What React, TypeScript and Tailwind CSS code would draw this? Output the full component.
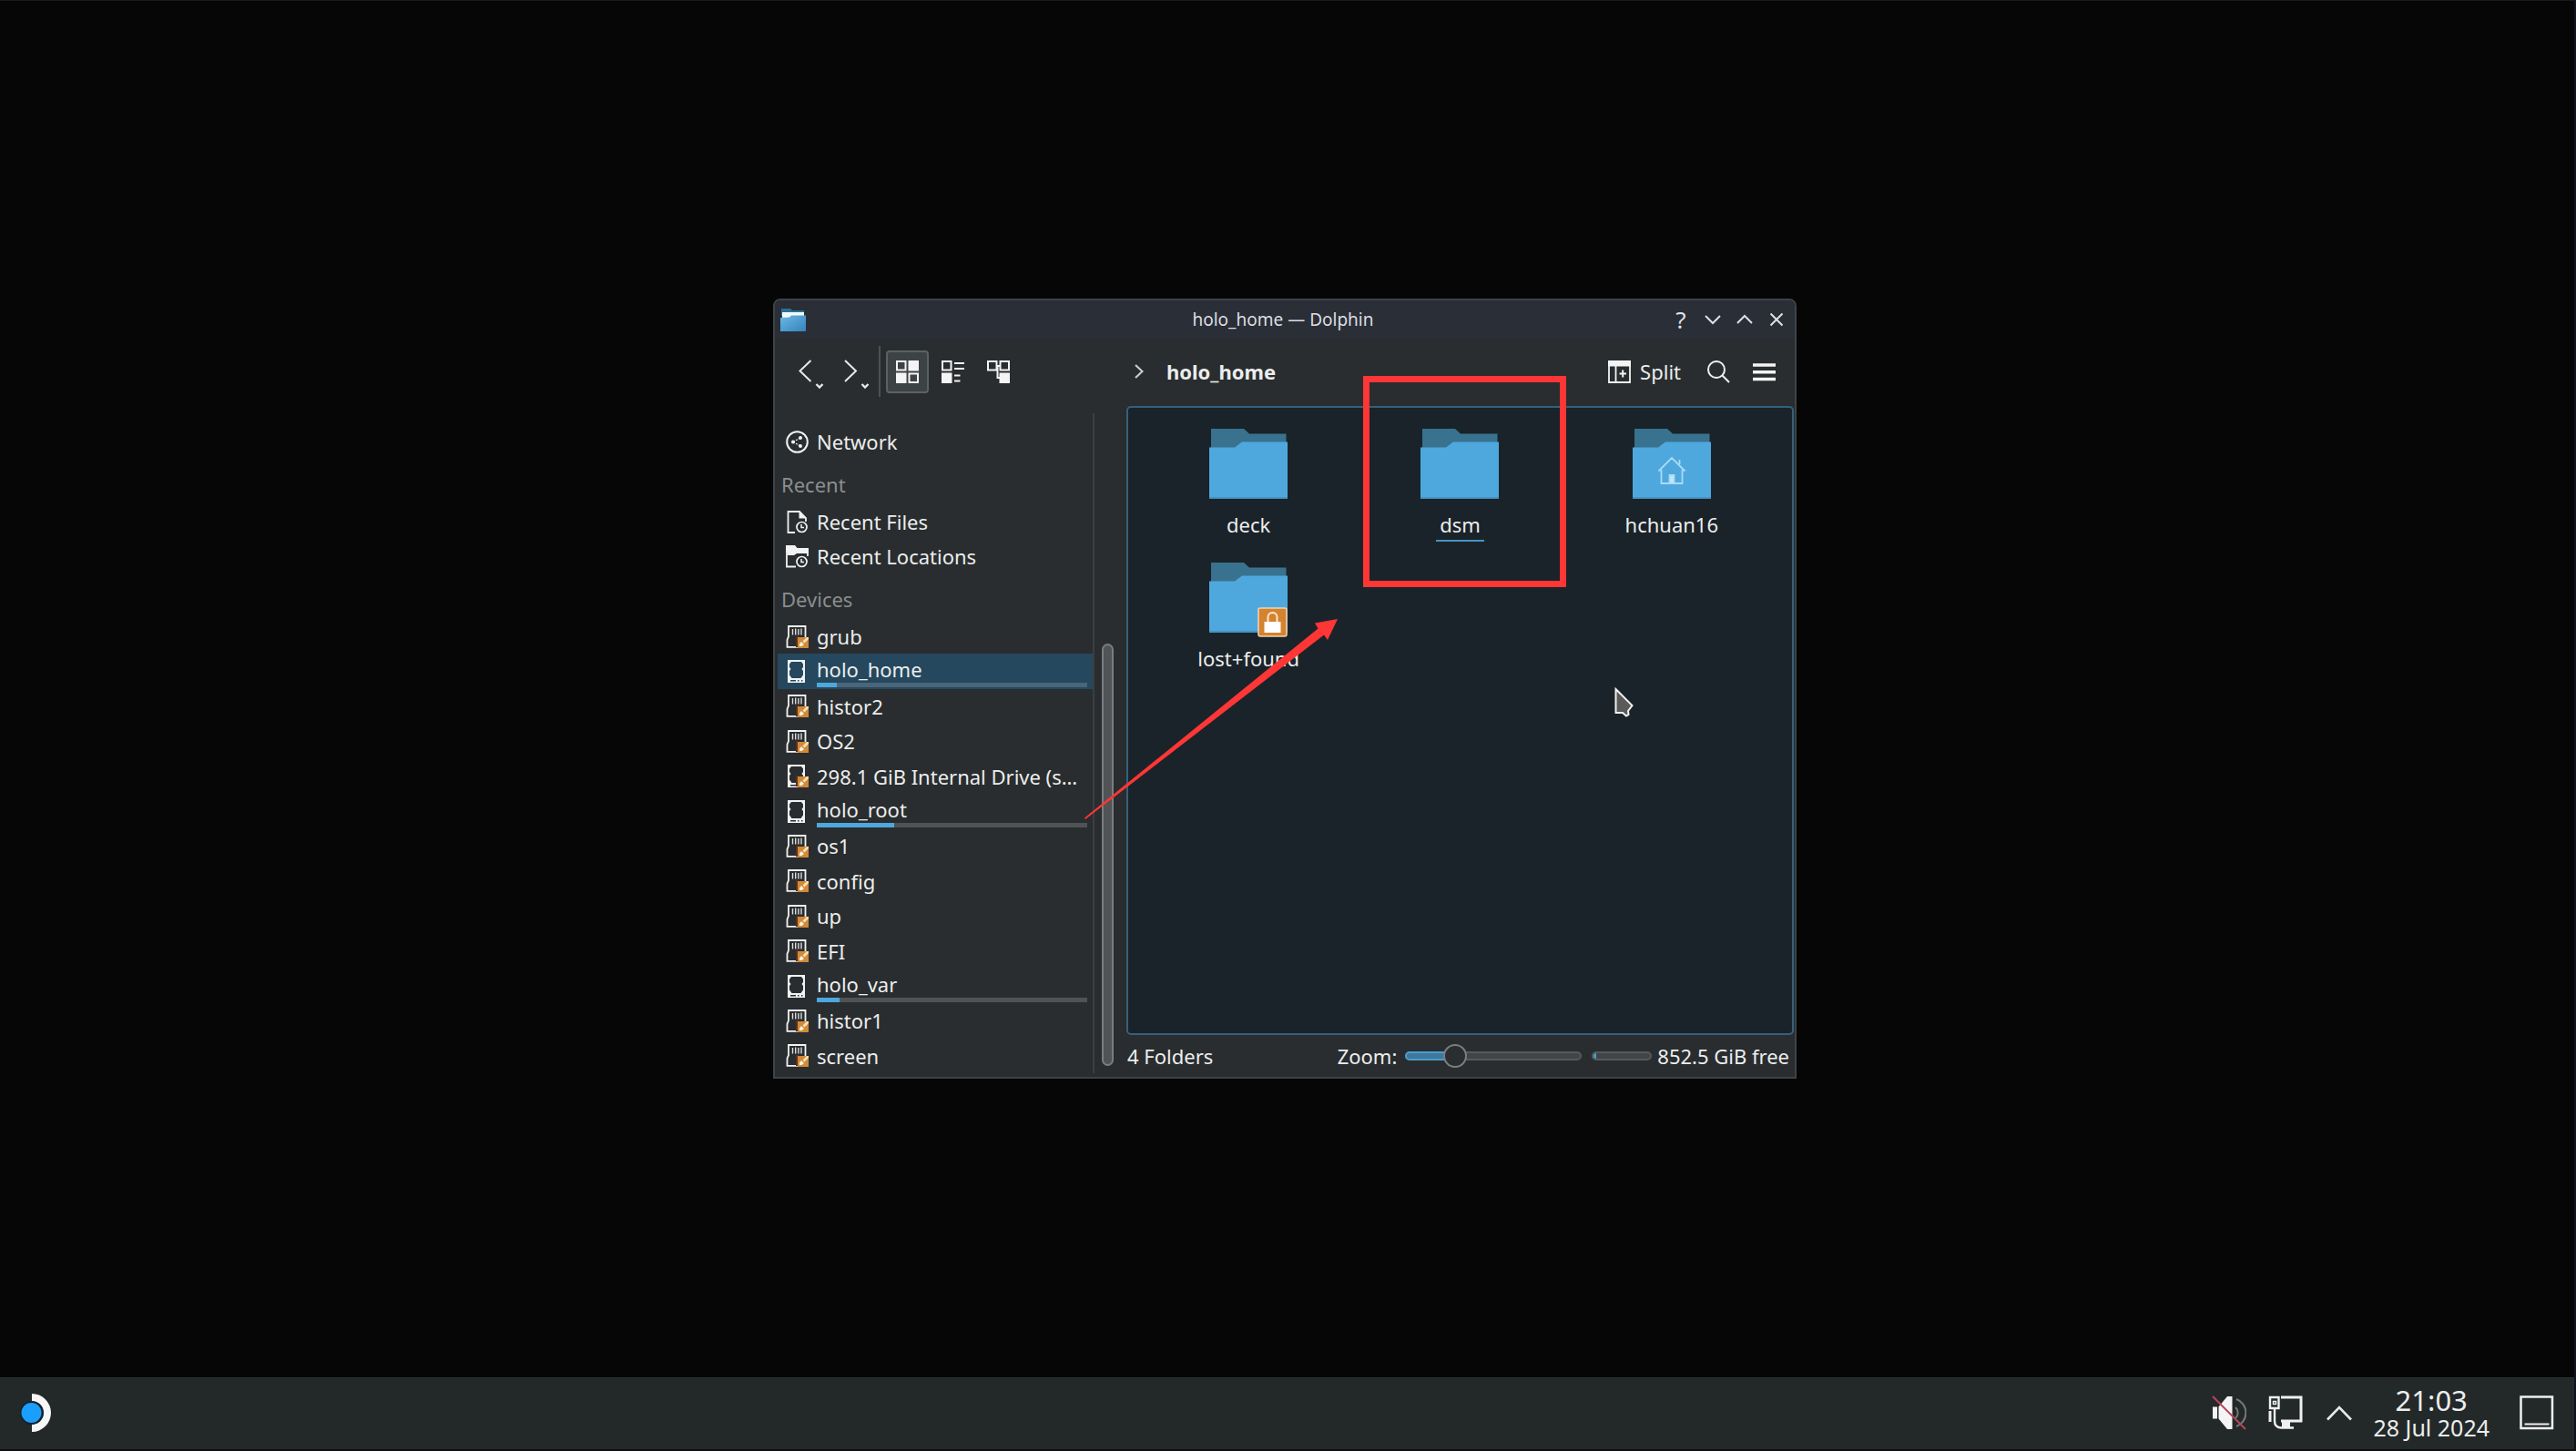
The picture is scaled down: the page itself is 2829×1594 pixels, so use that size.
import React from "react";

type Device = { name: string; kind: "card" | "disk" | "disk-unmounted"; used?: number; active?: boolean };

const devices: Device[] = [
  { name: "grub", kind: "card" },
  { name: "holo_home", kind: "disk", used: 7.5, active: true },
  { name: "histor2", kind: "card" },
  { name: "OS2", kind: "card" },
  { name: "298.1 GiB Internal Drive (s…", kind: "disk-unmounted" },
  { name: "holo_root", kind: "disk", used: 28.5 },
  { name: "os1", kind: "card" },
  { name: "config", kind: "card" },
  { name: "up", kind: "card" },
  { name: "EFI", kind: "card" },
  { name: "holo_var", kind: "disk", used: 8.5 },
  { name: "histor1", kind: "card" },
  { name: "screen", kind: "card" },
];

const folders: { name: string; emblem?: "home" | "lock"; hovered?: boolean }[] = [
  { name: "deck" },
  { name: "dsm", hovered: true },
  { name: "hchuan16", emblem: "home" },
  { name: "lost+found", emblem: "lock" },
];

/* ---------- sidebar icons ---------- */

const UnmountedBadge = () => (
  <g>
    <rect x="11" y="12" width="3" height="12" fill="#5a2f1c" />
    <rect x="13" y="13" width="12" height="12" fill="#d08a3a" />
    <path d="M15 20.500l2-2.500 3 3-2.500 2h-2.500z" fill="#fdf1de" />
    <path d="M18.500 17.500l4.500-4.500h2v2l-4.500 4.500z" fill="#fbe0ae" />
  </g>
);

const CardIcon = () => (
  <svg viewBox="0 0 25 25" className="size-[25px] shrink-0" fill="none">
    <path d="M13 23.800H1.500V16L3 12V1H21.500V14" stroke="#f2f2f2" strokeWidth="1.800" />
    <path d="M7.500 4v6.500M10.700 3.500v7M13.900 4v6.500M17 3.500v7" stroke="#dcdcdc" strokeWidth="1.400" />
    <UnmountedBadge />
  </svg>
);

const DiskIcon = ({ unmounted }: { unmounted?: boolean }) => (
  <svg viewBox="0 0 25 25" className="size-[25px] shrink-0">
    <path
      fillRule="evenodd"
      fill="#f2f2f2"
      d="M2 0H21V25H2ZM6 2L4 4.500V8L5.500 10L4 12V16.500L6.500 20H16.500L19 16.500V12L17.500 10L19 8V4.500L17 2ZM5 22V23.500H11V22ZM13 22V23.500H14.500V22ZM17 22V23.500H18.500V22Z"
    />
    {unmounted && <UnmountedBadge />}
  </svg>
);

const NetworkIcon = () => (
  <svg viewBox="0 0 25 25" className="size-[25px] shrink-0" fill="none">
    <circle cx="12.500" cy="12.500" r="11.300" stroke="#f2f2f2" strokeWidth="2" />
    <path d="M8 12.500L16 8M8 12.500L16 17" stroke="#f2f2f2" strokeWidth="1.300" strokeDasharray="2 1.500" />
    <circle cx="8" cy="12.500" r="2" fill="#f2f2f2" />
    <circle cx="16" cy="8" r="2" fill="#f2f2f2" />
    <circle cx="16" cy="17" r="2" fill="#f2f2f2" />
  </svg>
);

const RecentClock = () => (
  <g>
    <circle cx="17.500" cy="18" r="5.500" stroke="#f2f2f2" strokeWidth="1.700" />
    <path d="M17 15v3.500h3" stroke="#f2f2f2" strokeWidth="1.500" />
  </g>
);

const RecentFilesIcon = () => (
  <svg viewBox="0 0 25 25" className="size-[25px] shrink-0" fill="none">
    <path d="M10 24H2.500V1H15L22 8V12" stroke="#f2f2f2" strokeWidth="1.800" />
    <path d="M14.500 1V8.500H22.500Z" fill="#f2f2f2" />
    <RecentClock />
  </svg>
);

const RecentLocationsIcon = () => (
  <svg viewBox="0 0 25 25" className="size-[25px] shrink-0" fill="none">
    <path d="M0 0H10L12.500 3H25V9H12L9 11H2V8H0Z" fill="#f2f2f2" />
    <path d="M11 23.500H1V4M24 4V12" stroke="#f2f2f2" strokeWidth="1.800" />
    <RecentClock />
  </svg>
);

/* ---------- toolbar icons ---------- */

const NavArrow = ({ forward }: { forward?: boolean }) => (
  <svg viewBox="0 0 30 40" className="h-10 w-[30px]" fill="none" stroke="#e8e8e8">
    <path d={forward ? "M2 8L14 19.500L2 31" : "M14.500 8L2.500 19.500L14.500 31"} strokeWidth="2" />
    <path d="M20.500 34L24 37.500L27.500 34" strokeWidth="2.400" />
  </svg>
);

const IconsViewIcon = () => (
  <svg viewBox="0 0 25 25" className="size-[25px]" fill="none" stroke="#f4f4f4" strokeWidth="2">
    <path d="M1 1H10.500V10.500H1ZM14.500 14.500H24V24H14.500Z" />
    <path d="M13.500 0H25V11.500H13.500ZM0 13.500H11.500V25H0Z" fill="#f4f4f4" stroke="none" />
  </svg>
);

const CompactViewIcon = () => (
  <svg viewBox="0 0 25 25" className="size-[25px]" fill="none" stroke="#f4f4f4" strokeWidth="2">
    <path d="M1 1H10.500V10.500H1Z" />
    <path d="M0 13.500H11.500V25H0Z" fill="#f4f4f4" stroke="none" />
    <path d="M14 3H25M14 9H25M14 16.500H20.500M14 22.500H20.500" />
  </svg>
);

const TreeViewIcon = () => (
  <svg viewBox="0 0 25 25" className="size-[25px]" fill="none" stroke="#f4f4f4" strokeWidth="2">
    <path d="M1 1H10.500V10.500H1ZM14.500 1H24V10.500H14.500Z" />
    <path d="M10.500 6H14.500M11.500 6V19H14" />
    <path d="M13.500 13.500H25V25H13.500Z" fill="#f4f4f4" stroke="none" />
  </svg>
);

const SplitIcon = () => (
  <svg viewBox="0 0 25 25" className="size-[25px]" fill="none" stroke="#f4f4f4">
    <path d="M0 0H25V6.500H0Z" fill="#f4f4f4" stroke="none" />
    <path d="M1 1V24H24V1M8.500 6V24" strokeWidth="1.800" />
    <path d="M12.500 14.500H20M16.200 10.500V18.500" strokeWidth="2" />
  </svg>
);

const SearchIcon = () => (
  <svg viewBox="0 0 25 25" className="size-[25px]" fill="none" stroke="#f0f0f0" strokeWidth="2">
    <circle cx="10" cy="10" r="9" />
    <path d="M16.500 16.500L24 24" />
  </svg>
);

const MenuIcon = () => (
  <svg viewBox="0 0 25 25" className="size-[25px]" stroke="#f4f4f4" strokeWidth="3.600">
    <path d="M0 5H25M0 12.700H25M0 20.500H25" />
  </svg>
);

const WindowGlyph = ({ d }: { d: string }) => (
  <svg viewBox="0 0 20 20" className="size-5" fill="none" stroke="#dfe0e2" strokeWidth="2">
    <path d={d} />
  </svg>
);

const AppIcon = () => (
  <svg viewBox="0 0 28 25" className="h-[25px] w-7">
    <defs>
      <linearGradient id="app" x1="0" y1="0" x2="1" y2="1">
        <stop offset="0" stopColor="#6cb8e6" />
        <stop offset="1" stopColor="#3583bb" />
      </linearGradient>
    </defs>
    <path d="M1 0H11L13 2H26V8H1Z" fill="#2e6f92" />
    <path d="M2 4H26V10H2Z" fill="#f3fafd" />
    <path d="M0 10L10 9.500L12 7.500H28V25H0Z" fill="url(#app)" />
  </svg>
);

/* ---------- file view ---------- */

const FolderIcon = ({ emblem }: { emblem?: "home" | "lock" }) => (
  <svg viewBox="0 0 86 82" className="h-[82px] w-[86px]" fill="none">
    <path d="M2 0H38L44 5.500H84.500V40H2Z" fill="#38728f" />
    <path d="M0 20.500H28L36 14.500H86V77H0Z" fill="#4fa8dd" />
    <path d="M0 76H86" stroke="#4593c4" strokeWidth="2" />
    {emblem === "home" && (
      <g stroke="#a9dcf6" strokeWidth="1.800">
        <path d="M28.500 46.500L43 32L57.500 46.500M31.500 45V60H54.500V45M51.500 39V34" />
        <path d="M40.500 51H45.500V60H40.500Z" fill="#c9e6f6" />
      </g>
    )}
    {emblem === "lock" && (
      <g>
        <rect x="54" y="50" width="31" height="31" rx="2" fill="#d4832f" stroke="#f2d3b0" strokeWidth="1.500" />
        <path d="M64.500 66V60a5 5 0 0 1 10 0V66" stroke="#fbe9d2" strokeWidth="2" />
        <rect x="60.500" y="65" width="18" height="12" fill="#fff" />
      </g>
    )}
  </svg>
);

const SidebarRow = ({ icon, children }: { icon: React.ReactNode; children: React.ReactNode }) => (
  <li>
    <button className="flex h-[38px] w-full items-center gap-[9px] pl-[9px] text-left">
      {icon}
      <span className="leading-[30px]">{children}</span>
    </button>
  </li>
);

const DeviceRow = ({ device }: { device: Device }) => (
  <li className={device.active ? "bg-[#25485e]" : ""}>
    <button className="flex h-full w-full items-center gap-[9px] pr-[6px] pl-[9px] text-left">
      {device.kind === "card" ? <CardIcon /> : <DiskIcon unmounted={device.kind === "disk-unmounted"} />}
      <span className="flex-1 whitespace-nowrap">
        <span className="block leading-[30px]">{device.name}</span>
        {device.used !== undefined && (
          <span className={device.active ? "block h-[5px] bg-[#4a6678]" : "block h-[5px] bg-[#4f5356]"}>
            <span className="block h-full bg-[#4fa8dd]" style={{ width: `${device.used}%` }} />
          </span>
        )}
      </span>
    </button>
  </li>
);

const Places = () => (
  <nav className="mt-2 mb-1 flex w-[351px] flex-col border-r-2 border-[#3a3f42] pt-3 pl-[3px]">
    <ul>
      <SidebarRow icon={<NetworkIcon />}>Network</SidebarRow>
    </ul>
    <h2 className="h-[50px] pt-[13px] pl-1 leading-[30px] text-[#8b8e90]">Recent</h2>
    <ul>
      <SidebarRow icon={<RecentFilesIcon />}>Recent Files</SidebarRow>
      <SidebarRow icon={<RecentLocationsIcon />}>Recent Locations</SidebarRow>
    </ul>
    <h2 className="h-[50px] pt-[13px] pl-1 leading-[30px] text-[#8b8e90]">Devices</h2>
    <ul className="grid flex-1 auto-rows-fr">
      {devices.map((device) => (
        <DeviceRow key={device.name} device={device} />
      ))}
    </ul>
  </nav>
);

const TitleBar = () => (
  <header className="grid h-[42px] grid-cols-[1fr_auto_1fr] items-center bg-[#2a2e37] pr-[10px] pl-[6px]">
    <AppIcon />
    <h1 className="text-[19px] leading-7 text-[#dcdde0]">holo_home — Dolphin</h1>
    <div className="flex items-center justify-end gap-[15px]">
      <button aria-label="Help" className="w-5 text-center text-[26px] leading-7 text-[#dfe0e2]">?</button>
      <button aria-label="Minimize"><WindowGlyph d="M2 6L10 14L18 6" /></button>
      <button aria-label="Maximize"><WindowGlyph d="M2 14L10 6L18 14" /></button>
      <button aria-label="Close"><WindowGlyph d="M3.500 3.500L16.500 16.500M16.500 3.500L3.500 16.500" /></button>
    </div>
  </header>
);

const Toolbar = () => (
  <div className="flex h-[74px] items-center pb-[2px]">
    <div className="flex w-[386px] items-center pl-[25px]">
      <div className="flex gap-5">
        <button aria-label="Back"><NavArrow /></button>
        <button aria-label="Forward"><NavArrow forward /></button>
      </div>
      <div className="mr-[6px] ml-[9px] h-14 w-[2px] bg-[#4c5154]" />
      <div className="flex gap-[3px]">
        <button aria-label="Icons" className="grid size-[47px] place-items-center rounded-[4px] border-2 border-[#5c6164] bg-[#3d4245]">
          <IconsViewIcon />
        </button>
        <button aria-label="Compact" className="grid size-[47px] place-items-center"><CompactViewIcon /></button>
        <button aria-label="Details" className="grid size-[47px] place-items-center"><TreeViewIcon /></button>
      </div>
    </div>
    <div className="flex flex-1 items-center gap-[25px] pl-[9px]">
      <svg viewBox="0 0 10 16" className="h-4 w-[10px]" fill="none" stroke="#c9cbcc" strokeWidth="2.200">
        <path d="M1 1L8.500 8L1 15" />
      </svg>
      <a href="#" className="leading-[30px] font-bold">holo_home</a>
    </div>
    <div className="flex items-center pr-[21px]">
      <button className="mr-[29px] flex items-center gap-[10px]">
        <SplitIcon />
        <span className="leading-[30px]">Split</span>
      </button>
      <button aria-label="Search" className="mr-[25px]"><SearchIcon /></button>
      <button aria-label="Menu"><MenuIcon /></button>
    </div>
  </div>
);

const StatusBar = () => (
  <footer className="flex h-[46px] items-center pr-[5px] pl-[1px]">
    <span className="flex-1 leading-[30px]">4 Folders</span>
    <label htmlFor="zoom" className="leading-[30px]">Zoom:</label>
    <div className="relative ml-[9px] flex h-[26px] w-[194px] items-center">
      <div className="h-[10px] w-full rounded-full border-2 border-[#55595c] bg-[#414548]" />
      <div className="absolute left-0 h-[10px] w-[55px] rounded-full border-2 border-[#4b9ccd] bg-[#3e789a]" />
      <input
        id="zoom"
        type="range"
        min={0}
        max={16}
        defaultValue={4}
        className="absolute inset-0 h-[26px] w-full appearance-none bg-transparent [&::-webkit-slider-thumb]:size-[26px] [&::-webkit-slider-thumb]:appearance-none [&::-webkit-slider-thumb]:rounded-full [&::-webkit-slider-thumb]:border-2 [&::-webkit-slider-thumb]:border-[#7b7e80] [&::-webkit-slider-thumb]:bg-[#2a2e30]"
      />
    </div>
    <div className="mr-[6px] ml-[11px] h-[10px] w-[66px] overflow-hidden rounded-full border-2 border-[#55595c] bg-[#414548]">
      <div className="h-full w-[3px] bg-[#4b9ccd]" />
    </div>
    <span className="leading-[30px]">852.5 GiB free</span>
  </footer>
);

const DolphinWindow = () => (
  <section className="absolute top-[328px] left-[849px] flex h-[857px] w-[1124px] flex-col overflow-hidden rounded-t-[8px] border-2 border-[#3e4346] bg-[#292d2f]">
    <TitleBar />
    <Toolbar />
    <div className="flex flex-1">
      <Places />
      <div className="flex w-[35px] flex-col pt-[261px] pb-3 pl-2">
        <div className="w-[13px] flex-1 rounded-full border-2 border-[#7a7d7f] bg-[#505456]" />
      </div>
      <div className="flex flex-1 flex-col pr-[1px]">
        <main className="grid flex-1 auto-rows-[147px] grid-cols-3 rounded-[5px] border-2 border-[#36607c] bg-[#1a2329] px-4 pt-[23px]">
          {folders.map((folder) => (
            <a key={folder.name} href="#" className="flex flex-col items-center gap-2">
              <FolderIcon emblem={folder.emblem} />
              <span
                className={
                  folder.hovered
                    ? "border-b-2 border-[#4593c4] px-1 pb-[2px] leading-[30px]"
                    : "px-1 leading-[30px]"
                }
              >
                {folder.name}
              </span>
            </a>
          ))}
        </main>
        <StatusBar />
      </div>
    </div>
  </section>
);

const Taskbar = () => (
  <footer className="flex h-[81px] items-center border-t border-b-2 border-t-[#2b3032] border-b-[#0b1015] bg-[#232929] px-[22px] pb-[2px]">
    <button aria-label="Application launcher">
      <svg viewBox="0 0 36 44" className="h-11 w-9">
        <path d="M13 1A21 21 0 0 1 13 43V34.500A12.500 12.500 0 0 0 13 9.500Z" fill="#f7f7f7" />
        <circle cx="13" cy="22" r="13" fill="#15202c" />
        <circle cx="12.500" cy="22" r="11" fill="#1a9fff" />
      </svg>
    </button>
    <div className="ml-auto flex items-center">
      <button aria-label="Volume muted" className="mr-6">
        <svg viewBox="0 0 38 38" className="size-[38px]" fill="none">
          <path d="M1 12.500H6V25.500H1ZM7.500 12.500L17 1H22.500V37H17L7.500 25.500Z" fill="#f4f4f4" />
          <path d="M26 13a8 8 0 0 1 0 12" stroke="#75797a" strokeWidth="2" />
          <path d="M27 4a16 16 0 0 1 0 30" stroke="#75797a" strokeWidth="2" />
          <path d="M1 1L37 37" stroke="#b8455c" strokeWidth="2" />
        </svg>
      </button>
      <button aria-label="Wired network" className="mr-[26px]">
        <svg viewBox="0 0 38 38" className="size-[38px]" fill="none" stroke="#f0f0f0">
          <path d="M14 2H36V28H14" strokeWidth="3" />
          <path d="M2 2H11.500V14H2ZM7 14V28Q7 35 14 35.500H28" strokeWidth="2.400" />
          <path d="M5.500 6.500H8.500V9.500H5.500Z" strokeWidth="1.500" />
          <path d="M2 17V29" strokeWidth="3" />
          <path d="M15 28H24V35H15Z" fill="#f0f0f0" stroke="none" />
        </svg>
      </button>
      <button aria-label="Show hidden icons" className="mr-[23px]">
        <svg viewBox="0 0 28 18" className="h-[18px] w-7" fill="none" stroke="#e8e8e8" strokeWidth="2.600">
          <path d="M1 16.500L14 3L27 16.500" />
        </svg>
      </button>
      <button className="mr-[33px] text-center text-[#eceded]">
        <span className="block text-[31px] leading-8">21:03</span>
        <span className="block text-[25px] leading-7">28 Jul 2024</span>
      </button>
      <button aria-label="Show desktop">
        <svg viewBox="0 0 38 38" className="size-[38px]" fill="none" stroke="#f0f0f0">
          <path d="M1.500 1.500H36V36H1.500Z" strokeWidth="2.500" />
          <path d="M5.500 31.500H32.500" strokeWidth="2" />
        </svg>
      </button>
    </div>
  </footer>
);

/* Red box and arrow drawn over the window */
const Annotations = () => (
  <>
    <div className="pointer-events-none absolute top-[413px] left-[1497px] h-[232px] w-[223px] border-[7px] border-[#ff3636]" />
    <svg viewBox="0 0 280 224" className="pointer-events-none absolute top-[678px] left-[1190px] h-[224px] w-[280px]">
      <path d="M1 220.500L257.500 12.500L254 6.500L279 2L268 25L264 19.500L2 222Z" fill="#ff3636" />
    </svg>
    <svg viewBox="0 0 22 34" className="pointer-events-none absolute top-[755px] left-[1773px] h-[34px] w-[22px]">
      <path d="M1.500 2V28H9L13 31.500L15.500 30L15 26L19.500 20Z" fill="#5a5a5a" stroke="#f0f0f0" strokeWidth="2" />
    </svg>
  </>
);

export default function App() {
  return (
    <div className="flex h-screen flex-col border-t border-r-2 border-t-[#181b20] border-r-[#10131b] bg-[#060606] font-['Noto_Sans',sans-serif] text-[22px] text-[#eceded]">
      <div className="-mt-px flex-1">
        <DolphinWindow />
        <Annotations />
      </div>
      <Taskbar />
    </div>
  );
}
